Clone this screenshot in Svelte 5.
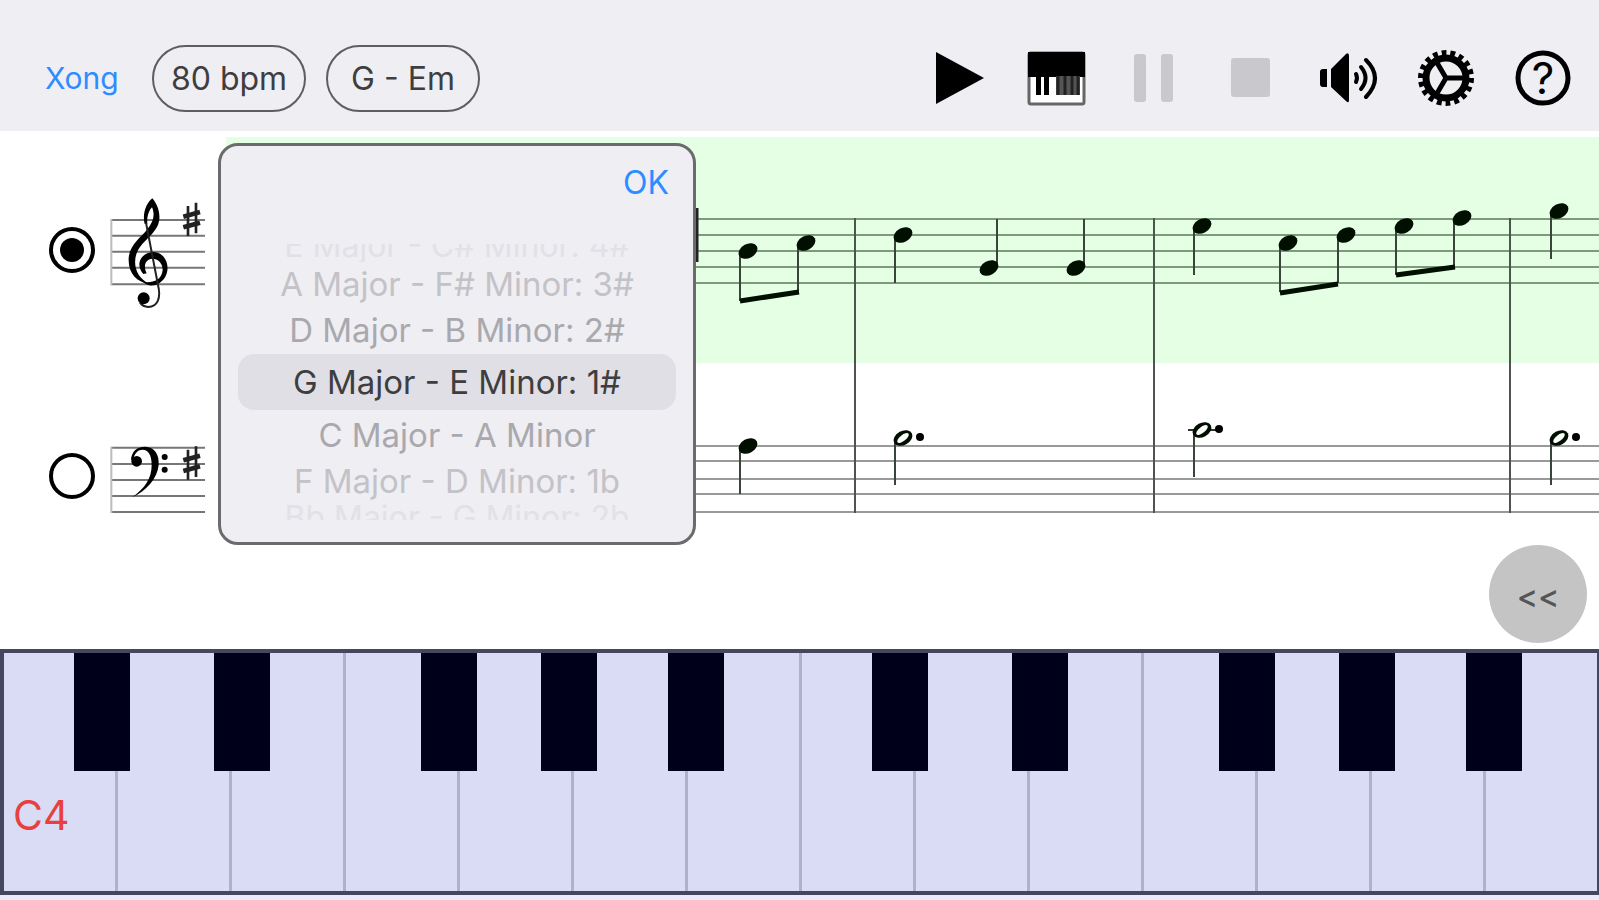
<script>
  let playing = $state(false);
  let track = $state('treble');
  let pickerOpen = $state(true);
  let selectedKey = $state('G Major - E Minor: 1#');

  const keys = [
    { label: 'E Major - C# Minor: 4#', depth: 'edge top' },
    { label: 'A Major - F# Minor: 3#', depth: 'far' },
    { label: 'D Major - B Minor: 2#', depth: 'near' },
    { label: 'G Major - E Minor: 1#', depth: 'center' },
    { label: 'C Major - A Minor', depth: 'near' },
    { label: 'F Major - D Minor: 1b', depth: 'far' },
    { label: 'Bb Major - G Minor: 2b', depth: 'edge bottom' },
  ];

  // staff lines and notes, measured from the top left of the music sheet
  const trebleLines = [88, 104, 120, 136, 152];
  const bassLines = [315, 330, 348, 363, 381];
  const barlines = [629, 928, 1284];

  const notes = [
    { x: 522, y: 120, stem: 170 },
    { x: 580, y: 112, stem: 160 },
    { x: 677, y: 104, stem: 152 },
    { x: 763, y: 137, stem: 88, up: true },
    { x: 850, y: 137, stem: 88, up: true },
    { x: 976, y: 95, stem: 144 },
    { x: 1062, y: 112, stem: 161 },
    { x: 1120, y: 104, stem: 152 },
    { x: 1178, y: 95, stem: 144 },
    { x: 1236, y: 87, stem: 136 },
    { x: 1333, y: 80, stem: 128 },
    { x: 522, y: 315, stem: 363 },
    { x: 677, y: 307, stem: 354, half: true },
    { x: 976, y: 299, stem: 346, half: true, ledger: true },
    { x: 1333, y: 307, stem: 354, half: true },
  ];

  const beams = [
    { x1: 514, y1: 170, x2: 573, y2: 161 },
    { x1: 1054, y1: 162, x2: 1112, y2: 153 },
    { x1: 1170, y1: 144, x2: 1229, y2: 136 },
  ];

  const whiteKeys = Array.from({ length: 14 }, (_, i) => i);

  // left edge of each black key, in percent of the keyboard
  const blackKeys = [4.4, 13.2, 26.2, 33.7, 41.7, 54.5, 63.3, 76.3, 83.8, 91.8];
</script>

{#snippet sharp(top)}
  <g transform="translate(0 {top})" stroke="#222">
    <path d="M264 12V102M288 2V94" stroke-width="8" />
    <path d="M250 44L300 30M250 76L300 62" stroke-width="14" />
  </g>
{/snippet}

<div class="app">
  <header class="toolbar">
    <div class="left">
      <button class="link">Xong</button>
      <button class="pill">80 bpm</button>
      <button class="pill" onclick={() => (pickerOpen = !pickerOpen)}>G - Em</button>
    </div>

    <div class="tools">
      <button aria-label="Play" onclick={() => (playing = true)}>
        <svg viewBox="0 0 60 60"><path d="M6 4L54 30L6 56Z" /></svg>
      </button>
      <button aria-label="Keyboard">
        <svg viewBox="0 0 60 60">
          <rect x="2" y="5" width="55" height="51" rx="2" fill="#fff" stroke="#666" stroke-width="3" />
          <path d="M1 4H58V29H1Z" />
          <path d="M9 28H14V47H9ZM17 28H22V47H17Z" />
          <path d="M29 28H53V47H29Z" fill="#555" />
          <path d="M31 28V47M38 28V47M45 28V47M51 28V47" stroke="#222" stroke-width="3" />
        </svg>
      </button>
      <button aria-label="Pause" disabled={!playing}>
        <svg viewBox="0 0 60 60" fill="#c9c8cd">
          <rect x="9" y="6" width="12" height="48" rx="3" />
          <rect x="36" y="6" width="12" height="48" rx="3" />
        </svg>
      </button>
      <button aria-label="Stop" disabled={!playing}>
        <svg viewBox="0 0 60 60" fill="#c9c8cd"><rect x="9" y="10" width="39" height="39" rx="3" /></svg>
      </button>
      <button aria-label="Volume">
        <svg viewBox="0 0 60 60">
          <path d="M1 24Q1 21 4 21H8V39H4Q1 39 1 36ZM12 21L27 6Q30 4 30 8V52Q30 56 27 53L12 39Z" />
          <g fill="none" stroke="#000" stroke-width="4" stroke-linecap="round">
            <path d="M37 26Q39 30 37 34" />
            <path d="M42 19Q51 30 42 41" />
            <path d="M47 12Q65 30 47 49" />
          </g>
        </svg>
      </button>
      <button aria-label="Settings">
        <svg viewBox="0 0 60 60" fill="none" stroke="#000">
          <circle cx="29" cy="30" r="25" stroke-width="6" pathLength="36" stroke-dasharray="1.1 0.9" />
          <circle cx="29" cy="30" r="20" stroke-width="7" />
          <path d="M29 30H49M29 30L19 13M29 30L19 47" stroke-width="5" />
        </svg>
      </button>
      <button aria-label="Help">
        <svg viewBox="0 0 60 60">
          <circle cx="29" cy="30" r="25" fill="none" stroke="#000" stroke-width="5" />
          <text x="29" y="46" text-anchor="middle">?</text>
        </svg>
      </button>
    </div>
  </header>

  <main class="score">
    <div class="tracks">
      <label class="track">
        <input type="radio" value="treble" bind:group={track} aria-label="Treble staff" />
        <svg width="110" height="120" viewBox="0 0 330 360">
          <path class="staff" d="M34 90H315M34 137H315M34 185H315M34 233H315M34 283H315" />
          <path d="M34 87V286" stroke="#bbb" stroke-width="6" />
          <path
            d="M157 25C172 42 180 66 178 88C174 130 128 150 112 185C98 215 104 262 150 282C110 277 84 250 86 205C88 165 125 140 142 118C160 95 166 75 156 52C146 62 140 82 142 102L134 102C126 70 140 38 157 25Z"
          />
          <path
            d="M130 252C106 225 120 190 158 186C190 186 206 215 202 242C198 270 172 290 148 286C140 284 135 280 128 275C150 280 185 275 188 240C188 218 172 205 156 206C138 208 128 225 140 250Z"
          />
          <path d="M138 98L174 285C184 325 172 350 145 351Q128 350 120 338" fill="none" stroke="#222" stroke-width="6" />
          <circle cx="131" cy="325" r="18" />
          {@render sharp(36)}
        </svg>
      </label>
      <label class="track">
        <input type="radio" value="bass" bind:group={track} aria-label="Bass staff" />
        <svg width="110" height="82" viewBox="0 0 330 246">
          <path class="staff" d="M34 38H315M34 87H315M34 135H315M34 183H315M34 231H315" />
          <path d="M34 35V234" stroke="#bbb" stroke-width="6" />
          <path
            d="M93 76C94 50 110 35 135 35C165 35 178 60 176 90C172 130 140 168 96 187C135 160 155 130 155 90C155 60 145 44 128 44C114 44 104 54 100 72Z"
          />
          <circle cx="110" cy="79" r="16" />
          <circle cx="194" cy="66" r="9" />
          <circle cx="194" cy="104" r="9" />
          {@render sharp(32)}
        </svg>
      </label>
    </div>

    <div class="sheet">
      <svg class="music">
        {#each trebleLines as y}
          <line x1="0" x2="100%" y1={y} y2={y} stroke="#7d9a7d" stroke-width="2" />
        {/each}
        {#each bassLines as y}
          <line x1="0" x2="100%" y1={y} y2={y} stroke="#999" stroke-width="2" />
        {/each}
        {#each barlines as x}
          <line x1={x} x2={x} y1="87" y2="382" stroke="#4d554d" stroke-width="2" />
        {/each}
        <path d="M471 77V131" stroke="#222" stroke-width="3" />
        {#each notes as n}
          {@const stemX = n.up ? n.x + 8 : n.x - 8}
          <line x1={stemX} x2={stemX} y1={n.y} y2={n.stem} stroke="#3a443a" stroke-width="2" />
          {#if n.ledger}
            <line x1={n.x - 14} x2={n.x + 20} y1={n.y} y2={n.y} stroke="#333" stroke-width="2" />
          {/if}
          <g transform="translate({n.x} {n.y}) rotate(-28)">
            <ellipse rx="10" ry="7" fill="#000f00" />
            {#if n.half}
              <ellipse rx="7" ry="3" fill="#fff" transform="rotate(-10)" />
            {/if}
          </g>
          {#if n.half}
            <circle cx={n.x + 17} cy={n.y - 1} r="4" />
          {/if}
        {/each}
        {#each beams as b}
          <line {...b} stroke="#000f00" stroke-width="5" />
        {/each}
      </svg>
    </div>

    {#if pickerOpen}
      <div class="popup">
        <div class="popup-head">
          <button class="link" onclick={() => (pickerOpen = false)}>OK</button>
        </div>
        <div class="wheel">
          {#each keys as key}
            <button
              class="row {key.depth}"
              aria-pressed={key.label === selectedKey}
              onclick={() => (selectedKey = key.label)}
            >{key.label}</button>
          {/each}
        </div>
      </div>
    {/if}

    <button class="rewind">&lt;&lt;</button>
  </main>

  <div class="keyboard">
    {#each whiteKeys as i}
      <button class="white" aria-label="White key {i + 1}">
        {#if i === 0}C4{/if}
      </button>
    {/each}
    {#each blackKeys as left, i}
      <button class="black" aria-label="Black key {i + 1}" style="left: {left}%"></button>
    {/each}
  </div>
</div>

<style>
  :global(body) {
    margin: 0;
    background: #fff;
  }

  .app {
    display: flex;
    flex-direction: column;
    min-height: 100vh;
    font-family: Inter, 'Liberation Sans', sans-serif;
    font-size: 32px;
    color: #3e3e40;
  }

  button {
    padding: 0;
    border: 0;
    background: none;
    font: inherit;
    color: inherit;
    cursor: pointer;
  }

  svg {
    display: block;
  }

  .toolbar {
    display: flex;
    align-items: center;
    justify-content: space-between;
    box-sizing: border-box;
    height: 131px;
    padding: 25px 25px 0 45px;
    background: #efeef3;
  }

  .left {
    display: flex;
    align-items: center;
    gap: 20px;
  }

  .link {
    color: #2d8cff;
  }

  .left .link {
    width: 87px;
    font-size: 30px;
    text-align: left;
  }

  .pill {
    box-sizing: border-box;
    width: 154px;
    height: 67px;
    border: 2px solid #5e5e61;
    border-radius: 34px;
  }

  .tools {
    display: flex;
    justify-content: space-between;
    width: 644px;
  }

  .tools svg {
    width: 60px;
    height: 60px;
  }

  .tools text {
    font-size: 44px;
  }

  .score {
    position: relative;
    display: flex;
    flex: 1;
    padding-top: 6px;
  }

  .tracks {
    width: 226px;
  }

  .track {
    display: flex;
    align-items: center;
    gap: 5px;
    height: 226px;
    padding-left: 49px;
  }

  .track input {
    appearance: none;
    display: grid;
    place-items: center;
    box-sizing: border-box;
    width: 46px;
    height: 46px;
    margin: 0;
    border: 4px solid #000;
    border-radius: 50%;
  }

  .track input:checked::before {
    content: '';
    width: 24px;
    height: 24px;
    border-radius: 50%;
    background: #000;
  }

  .staff {
    stroke: #777;
    stroke-width: 6;
  }

  .sheet {
    flex: 1;
    min-width: 0;
    background: linear-gradient(#e4ffe4, #e4ffe4) no-repeat 0 0 / 100% 226px;
  }

  .music {
    width: 100%;
    height: 452px;
    margin-top: -6px;
  }

  .popup {
    position: absolute;
    top: 12px;
    left: 218px;
    box-sizing: border-box;
    width: 478px;
    padding: 0 17px 22px;
    border: 3px solid #6b6b6d;
    border-radius: 20px;
    background: #efeef3;
  }

  .popup-head {
    display: flex;
    justify-content: flex-end;
    height: 98px;
    padding: 0 7px;
  }

  .popup-head .link {
    height: 72px;
  }

  .wheel {
    display: flex;
    flex-direction: column;
    font-size: 33px;
    line-height: 32px;
  }

  .row {
    display: flex;
    justify-content: center;
    align-items: center;
    white-space: nowrap;
  }

  .row.center {
    height: 56px;
    border-radius: 16px;
    background: #e0dfe5;
  }

  .row.near {
    height: 49px;
    color: #a9a9ad;
  }

  .row.far {
    height: 43px;
    color: #c3c2c7;
  }

  /* rows rolling out of sight show only the half that faces the centre */
  .row.edge {
    height: 18px;
    overflow: hidden;
    font-size: 32px;
    color: #e2e1e6;
  }

  .row.top {
    align-items: flex-end;
  }

  .row.bottom {
    align-items: flex-start;
  }

  .rewind {
    position: absolute;
    right: 12px;
    bottom: 6px;
    width: 98px;
    height: 98px;
    padding-top: 4px;
    border-radius: 50%;
    background: #c4c4c4;
    font-weight: 500;
    color: #555;
  }

  .keyboard {
    position: relative;
    display: flex;
    box-sizing: border-box;
    height: 246px;
    margin-bottom: 5px;
    border: solid #45465f;
    border-width: 4px 2px 4px 4px;
    background: #dadbf5;
    box-shadow: 0 5px #ebebfb;
  }

  .white {
    display: flex;
    flex: 1;
    align-items: flex-end;
    min-width: 0;
    padding: 0 0 51px 9px;
    border-right: 3px solid #b0b0ca;
    color: #e8403f;
    font-size: 41px;
  }

  .white:nth-child(14) {
    border-right: 0;
  }

  .black {
    position: absolute;
    top: 0;
    width: 56px;
    height: 118px;
    background: #00001a;
  }
</style>
